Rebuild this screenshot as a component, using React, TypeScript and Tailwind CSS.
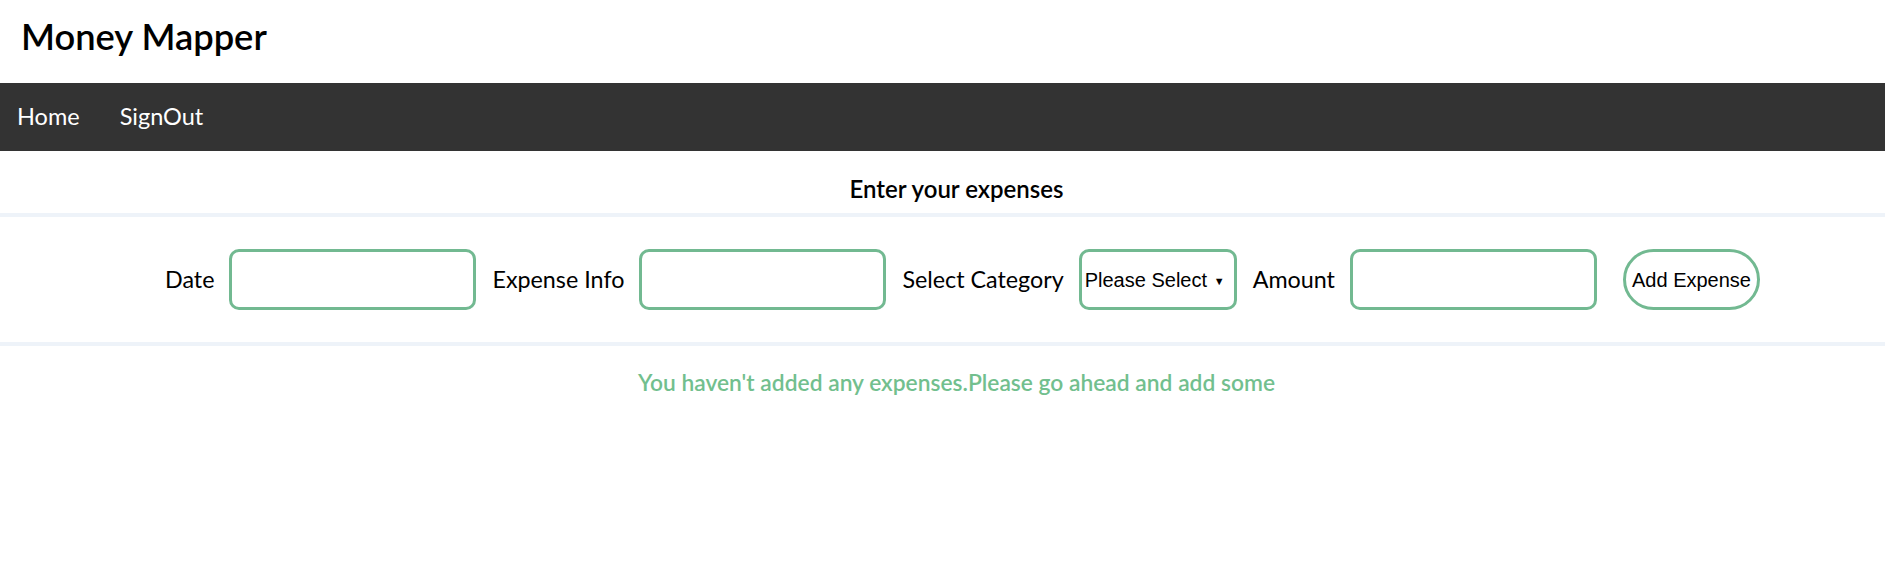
import React from "react";

const sans = "font-['Lato','Open_Sans','Noto_Sans',sans-serif]";
const arial = "font-['Liberation_Sans',Arial,sans-serif]";

function Field({ label, children }: { label: string; children: React.ReactNode }) {
  return (
    <>
      <label className="text-[23.3px] text-black mr-[15px] leading-none">{label}</label>
      {children}
    </>
  );
}

const inputCls =
  "w-[247px] h-[61px] border-[3px] border-[#72b991] rounded-[10px] bg-white outline-none mr-[16px] px-2 text-[20px]";

export default function App() {
  return (
    <div className={`${sans} min-h-[573px] bg-white text-black`}>
      <header className="h-[83px] px-[21px] pt-[12px]">
        <h1 className="text-[36.3px] leading-[48px] font-semibold">Money Mapper</h1>
      </header>

      <nav className="h-[68px] bg-[#333333] flex items-center px-[17px] gap-[40px]">
        <a href="#" className="text-white text-[23.5px]">Home</a>
        <a href="#" className="text-white text-[23.5px]">SignOut</a>
      </nav>

      <main>
        <h2 className="text-center text-[24px] font-semibold pt-[21px] pb-[7px] pl-[28px] leading-[34px]">
          Enter your expenses
        </h2>

        <form
          className="flex items-center justify-center h-[133px] border-y-4 border-[#eef3f9] pl-[56px]"
          onSubmit={(e) => e.preventDefault()}
        >
          <Field label="Date">
            <input type="text" className={inputCls} />
          </Field>
          <Field label="Expense Info">
            <input type="text" className={inputCls} />
          </Field>
          <Field label="Select Category">
            <div className="relative mr-[16px]">
              <select
                className={`appearance-none w-[158px] h-[61px] border-[3px] border-[#72b991] rounded-[10px] bg-white outline-none pl-[3px] text-[20px] text-black ${arial}`}
              >
                <option>Please Select</option>
                <option>Food</option>
                <option>Travel</option>
                <option>Bills</option>
              </select>
              <span className="pointer-events-none absolute right-[12px] top-1/2 -translate-y-1/2 text-[11px] leading-none text-black">
                ▼
              </span>
            </div>
          </Field>
          <Field label="Amount">
            <input type="text" className={`${inputCls} !mr-[26px]`} />
          </Field>
          <button
            type="submit"
            className={`h-[61px] px-[6px] border-[3px] border-[#72b991] rounded-full bg-white text-[20px] text-black ${arial} mr-[16px]`}
          >
            Add Expense
          </button>
        </form>

        <p className="text-center text-[22.8px] font-semibold text-[#72bf8e] pt-[19px] pl-[28px]">
          You haven't added any expenses.Please go ahead and add some
        </p>
      </main>
    </div>
  );
}
